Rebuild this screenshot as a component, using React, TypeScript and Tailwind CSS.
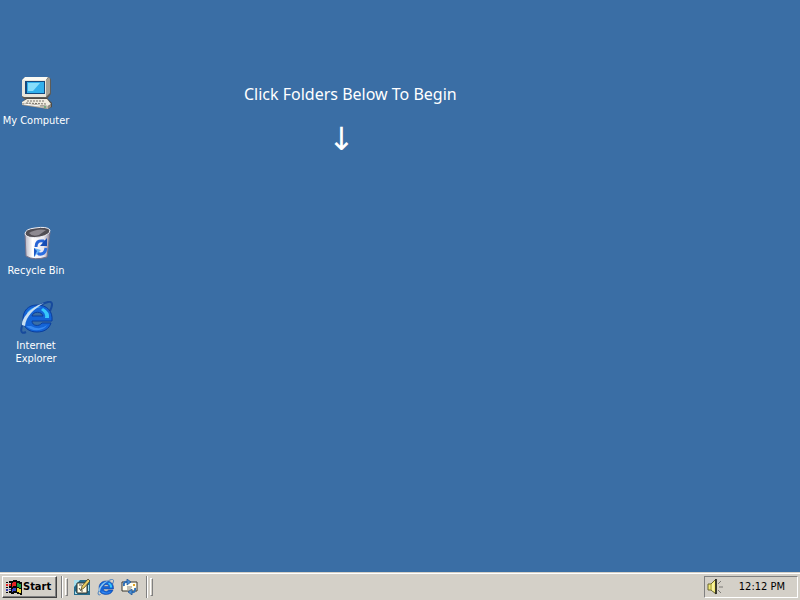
import type { ReactNode } from "react";

const uiFont = "font-['Tahoma','DejaVu_Sans_Condensed',sans-serif]";

function ComputerIcon() {
  return (
    <svg viewBox="0 0 32 34" className="h-[34px] w-8" aria-hidden="true">
      <path d="M2 4 L5 1 H28 L31 3 V18 L27 23 H4 L2 21 Z" fill="#5d5c58" />
      <path d="M2 4 L5 1 H28 L26 4 Z" fill="#fbfaf3" />
      <path d="M26 4 L29 1 L30 3 V17 L26 21 Z" fill="#a5a196" />
      <path d="M2 4 H26 V21 H4 L2 20 Z" fill="#e9e6dc" />
      <path d="M5 5 H25 V18 H5 Z" fill="#154a7e" />
      <path d="M7 6 H24 V17 H7 Z" fill="#32b0ec" />
      <path d="M8 7 H20 L13 15 H8 Z" fill="#86defb" />
      <path d="M8 22 H25 V24 H8 Z" fill="#3e3d3a" />
      <path d="M2 26 L7 22 H27 L32 27 V31 L28 33 L2 29 Z" fill="#4e4b46" />
      <path d="M2 26 L7 23 H27 L31 28 L28 30 L2 27 Z" fill="#f0ece0" />
      <path d="M2 27 L28 30 V33 L2 29 Z" fill="#bdb7ab" />
      <path d="M28 30 L31 28 V31 L28 33 Z" fill="#8d8880" />
      <path d="M7 25 H25 M6 27 L26 28" stroke="#77716a" strokeDasharray="2 1" />
      <path d="M4 28 L20 30" stroke="#fff" />
      <path d="M24 31 H26" stroke="#29a055" />
    </svg>
  );
}

function BinIcon() {
  return (
    <svg viewBox="0 0 32 34" className="h-[34px] w-8" aria-hidden="true">
      <defs>
        <linearGradient id="bin">
          <stop offset="0" stopColor="#b7b6c4" />
          <stop offset=".3" stopColor="#fff" />
          <stop offset=".75" stopColor="#e8e6ef" />
          <stop offset="1" stopColor="#87839a" />
        </linearGradient>
      </defs>
      <path d="M5 8 L6 30 Q14 35 27 31 L30 6 Z" fill="url(#bin)" stroke="#77738a" />
      <path d="M5 8 Q5 3 15 2 Q27 0 30 4 Q30 9 20 11 Q7 13 5 8 Z" fill="#504d54" stroke="#eeeef4" />
      <path d="M9 7 Q17 2 26 4 L19 9 Q12 11 9 7" fill="#8d8991" />
      <path d="M16 21 Q16 14 23 15 L25 17" fill="none" stroke="#2563d5" strokeWidth="3" />
      <path d="M27 12 V20 L20 20 Z" fill="#154bb4" />
      <path d="M26 22 Q25 29 19 28 L17 26" fill="none" stroke="#2c6ee0" strokeWidth="3" />
      <path d="M14 31 V22 L21 24 Z" fill="#6bb5f6" />
      <path d="M14 31 V22 L17 25 Z" fill="#1c57c6" />
    </svg>
  );
}

function ExplorerIcon({ small = false }: { small?: boolean }) {
  return (
    <svg viewBox="0 0 34 34" className={small ? "size-[17px]" : "h-[34px] w-[34px]"} aria-hidden="true">
      <path d="M7 31 C1 34 1 28 5 21 C10 11 21 3 29 1 C34 0 34 4 31 10" fill="none" stroke={small ? "#477fbd" : "#174a9c"} strokeWidth="2" />
      <path
        fillRule="evenodd"
        d="M18 4 C9 4 4 10 4 18 C4 27 10 31 18 31 C25 31 30 28 32 22 H23 C20 26 13 25 13 20 H33 C34 10 28 4 18 4 Z M13 15 C14 10 23 10 24 15 Z"
        fill="#1464d6"
        stroke="#0a3e9d"
      />
      <path d="M8 12 C11 7 17 5 22 6 Q14 7 10 14 Z" fill="#43adf8" />
      <path d="M24 7 Q31 11 30 17 H26 Q27 12 22 9 Z" fill="#36c8fc" />
      <path d="M7 25 Q12 30 20 29 Q26 28 28 24 Q21 30 12 25 Z" fill="#3789f1" />
      <path d="M3 24 C3 15 14 5 25 2 C15 8 7 15 6 25 Z" fill={small ? "#93c7ed" : "#c8dff2"} />
    </svg>
  );
}

function FlagIcon() {
  return (
    <svg viewBox="0 0 16 16" className="size-4" aria-hidden="true" shapeRendering="crispEdges">
      <path d="M5 2 H7 V1 H11 V2 H14 V3 H16 V16 H14 V15 H11 V14 H8 V15 H5 Z" fill="#080808" />
      <path d="M0 3 H2 V4 H0 Z M3 2 H5 V4 H3 Z M0 8 H2 V9 H0 Z M3 7 H5 V9 H3 Z M0 13 H2 V14 H0 Z M3 12 H5 V14 H3 Z" fill="#080808" />
      <path d="M0 5 H2 V7 H0 Z M3 5 H5 V7 H3 Z" fill="#e62325" />
      <path d="M0 10 H2 V12 H0 Z M3 10 H5 V11 H3 Z" fill="#3039b7" />
      <path d="M6 4 H7 V3 H10 V7 H7 V8 H6 Z" fill="#e62325" />
      <path d="M11 4 H13 V5 H15 V9 H13 V8 H11 Z" fill="#1c9b43" />
      <path d="M6 10 H7 V9 H10 V12 H7 V13 H6 Z" fill="#3446c5" />
      <path d="M11 9 H13 V10 H15 V14 H13 V13 H11 Z" fill="#efd63b" />
    </svg>
  );
}

function DesktopPadIcon() {
  return (
    <svg viewBox="0 0 16 16" className="size-4" aria-hidden="true">
      <path d="M0 1 H16 V16 H0 Z" fill="#246b8c" />
      <path d="M0 1 H6 L0 8 Z M1 12 L4 15 H1 Z M14 6 H15 V12 H14 Z" fill="#a9e1ef" />
      <path d="M3 4 H13 V14 H3 Z" fill="#fffdea" stroke="#34362f" />
      <path d="M5 6 H8 M5 9 L7 12 H9" fill="none" stroke="#55534a" />
      <path d="M7 11 L8 7 L14 0 L16 2 L10 9 Z" fill="#e8cc62" stroke="#393117" strokeWidth=".7" />
    </svg>
  );
}

function MailIcon() {
  return (
    <svg viewBox="0 0 17 16" className="h-4 w-[17px]" aria-hidden="true">
      <path d="M1 3 H16 V12 H1 Z" fill="#fffef0" stroke="#36352f" />
      <path d="M6 8 H11 M6 10 H10" stroke="#888477" />
      <path d="M12 5 H14 V7 H12 Z" fill="#e0a020" />
      <path d="M3 7 Q2 2 7 3" fill="none" stroke="#2f70b7" strokeWidth="2" />
      <path d="M6 0 L10 3 L6 6 Z" fill="#4b92d8" stroke="#174b8d" strokeWidth=".7" />
      <path d="M14 9 Q15 14 10 13" fill="none" stroke="#2f70b7" strokeWidth="2" />
      <path d="M11 10 L7 13 L11 16 Z" fill="#4b92d8" stroke="#174b8d" strokeWidth=".7" />
    </svg>
  );
}

function SpeakerIcon() {
  return (
    <svg viewBox="0 0 17 16" className="h-4 w-[17px]" aria-hidden="true">
      <path d="M1 5 H4 L9 0 V15 L4 11 H1 Z" fill="#f1e975" stroke="#6b672f" />
      <path d="M4 5 V11" stroke="#a09a43" />
      <path d="M6 4 V12" stroke="#fffccb" />
      <path d="M9 0 V15" stroke="#191919" strokeWidth="1.5" />
      <path d="M11 5 L14 2 M12 8 H16 M11 11 L14 14" stroke="#7b7974" />
    </svg>
  );
}

function Shortcut({ label, children, className = "" }: { label: string; children: ReactNode; className?: string }) {
  return (
    <button className={`flex w-[72px] flex-col items-center gap-1 self-start text-[11px] leading-[13px] text-white ${className}`}>
      {children}
      <span>{label}</span>
    </button>
  );
}

function Grip() {
  return (
    <div className="flex h-[22px] items-center gap-0.5" aria-hidden="true">
      <span className="h-full w-0.5 border-l border-r border-l-[#808080] border-r-white" />
      <span className="h-[18px] w-[3px] border border-t-white border-r-[#808080] border-b-[#808080] border-l-white" />
    </div>
  );
}

export default function App() {
  return (
    <div className={`flex min-h-screen flex-col bg-[#3a6ea5] ${uiFont}`}>
      <main className="flex grow">
        <nav aria-label="Desktop" className="grid w-[72px] auto-rows-[75px] content-start pt-[76px]">
          <Shortcut label="My Computer"><ComputerIcon /></Shortcut>
          <Shortcut label="Recycle Bin" className="row-start-3"><BinIcon /></Shortcut>
          <Shortcut label="Internet Explorer" className="row-start-4"><ExplorerIcon /></Shortcut>
        </nav>
        <section className="ml-[172px] flex flex-col pt-[84px] font-['Noto_Sans',sans-serif] text-white">
          <h1 className="text-base leading-5">Click Folders Below To Begin</h1>
          <p className="mt-4 pl-[84px] font-['Noto_Sans','DejaVu_Sans',sans-serif] text-[32px] leading-9">↓</p>
        </section>
      </main>

      <footer className="flex h-7 items-start border-t border-[#d4d0c8] bg-[#d4d0c8] px-0.5 pt-[3px] shadow-[inset_0_1px_0_#ffffff]">
        <button className="flex h-[22px] w-[55px] items-center gap-px border border-t-white border-r-[#404040] border-b-[#404040] border-l-white pl-[3px] text-[11px] font-bold text-black shadow-[inset_-1px_-1px_0_#808080]">
          <FlagIcon />
          Start
        </button>
        <div className="ml-1 flex items-center">
          <Grip />
          <div className="ml-1.5 flex items-center gap-[7px]">
            <button aria-label="Show Desktop"><DesktopPadIcon /></button>
            <button aria-label="Launch Internet Explorer"><ExplorerIcon small /></button>
            <button aria-label="Launch Outlook Express"><MailIcon /></button>
          </div>
          <div className="ml-2"><Grip /></div>
        </div>
        <div className="ml-auto flex h-[22px] w-[94px] items-center justify-between border border-t-[#808080] border-r-white border-b-white border-l-[#808080] pr-3 pl-0.5 text-[11px] text-black">
          <button aria-label="Volume"><SpeakerIcon /></button>
          <time dateTime="12:12">12:12 PM</time>
        </div>
      </footer>
    </div>
  );
}
